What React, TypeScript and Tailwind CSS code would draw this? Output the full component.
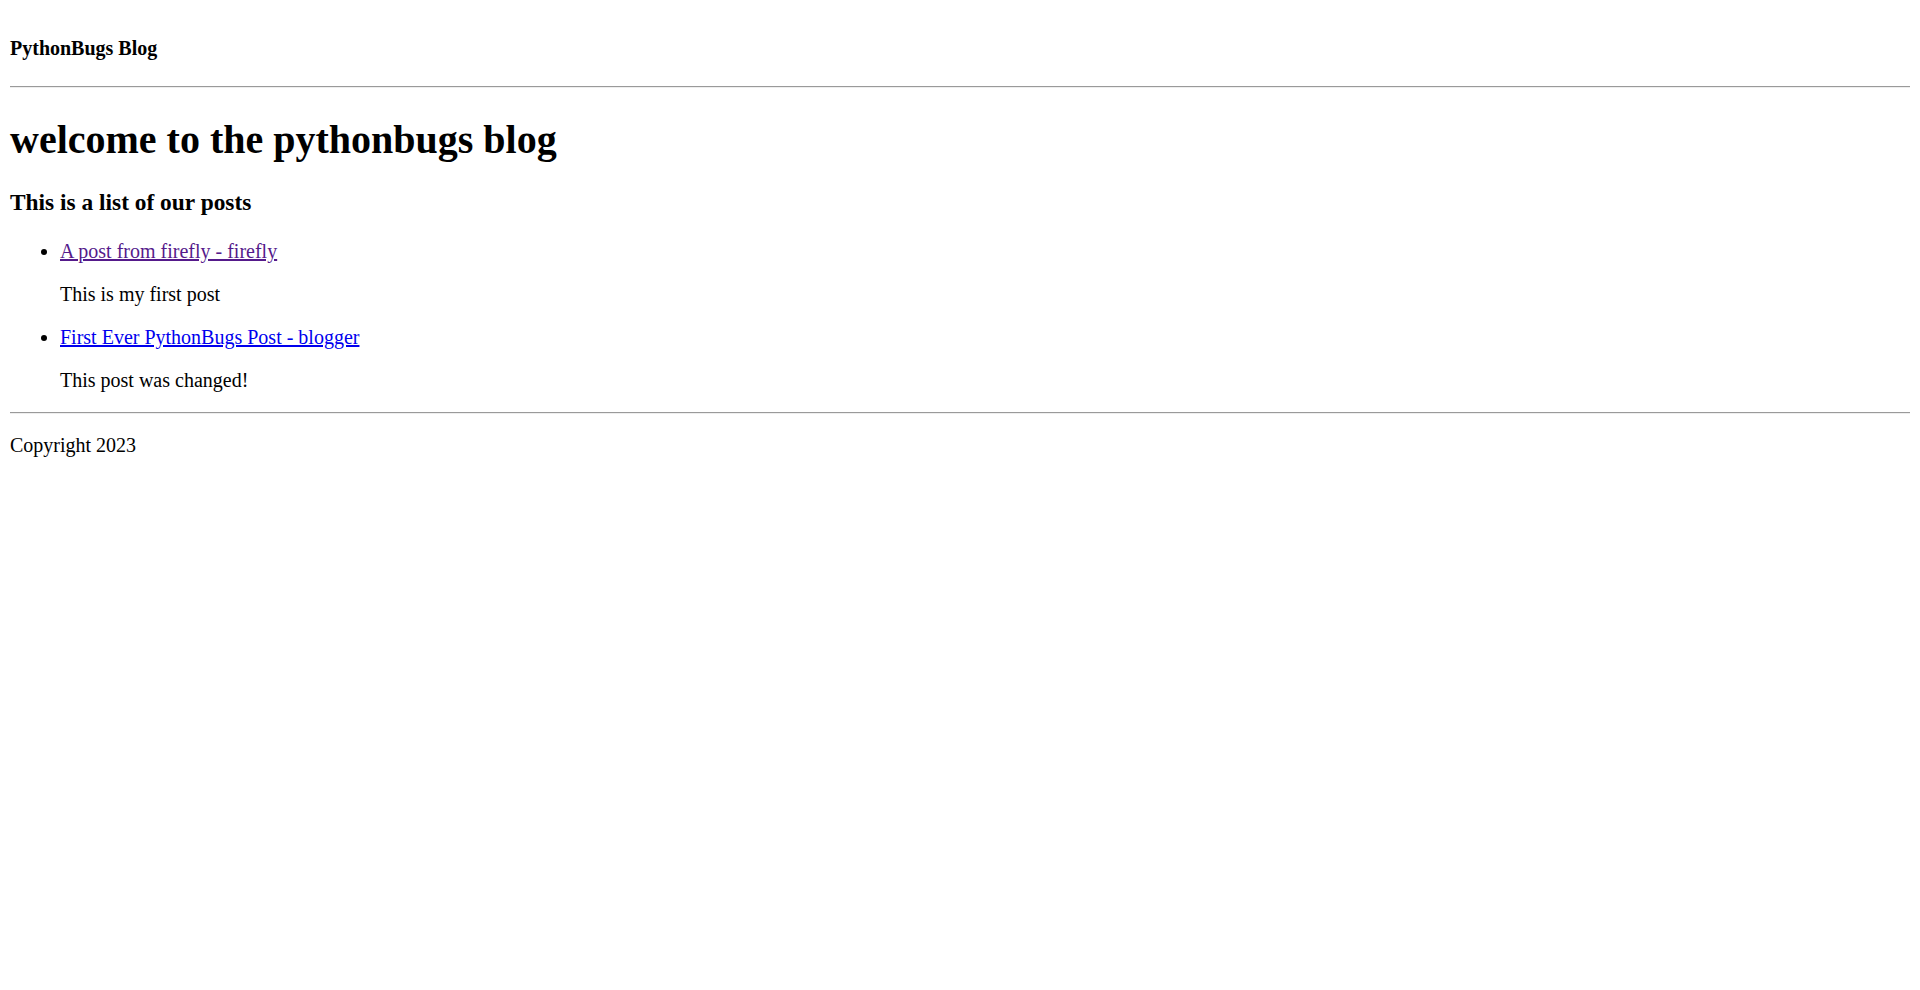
export default function App() {
  const posts = [
    { title: "A post from firefly - firefly", body: "This is my first post", visited: true },
    { title: "First Ever PythonBugs Post - blogger", body: "This post was changed!", visited: false },
  ];

  return (
    <div className="min-h-screen bg-white p-[10px] font-['Liberation_Serif','Times_New_Roman',serif] text-[20px] leading-[23px] text-black">
      <h4 className="my-[26.6px] text-[20px] font-bold leading-[23px]">PythonBugs Blog</h4>
      <hr className="my-[10px] border-t border-b border-t-[#9a9a9a] border-b-[#eeeeee]" />
      <h1 className="mt-[28.5px] mb-[26.8px] text-[40px] font-bold leading-[46px]">welcome to the pythonbugs blog</h1>
      <h3 className="my-[23.4px] text-[23.4px] font-bold leading-[27px]">This is a list of our posts</h3>
      <ul className="my-[20px] list-disc pl-[50px]">
        {posts.map((post) => (
          <li key={post.title}>
            <a
              href="#"
              className={`underline ${post.visited ? "text-[#551a8b]" : "text-[#0000ee]"}`}
            >
              {post.title}
            </a>
            <p className="my-[20px]">{post.body}</p>
          </li>
        ))}
      </ul>
      <hr className="my-[10px] border-t border-b border-t-[#9a9a9a] border-b-[#eeeeee]" />
      <p className="my-[20px]">Copyright 2023</p>
    </div>
  );
}
